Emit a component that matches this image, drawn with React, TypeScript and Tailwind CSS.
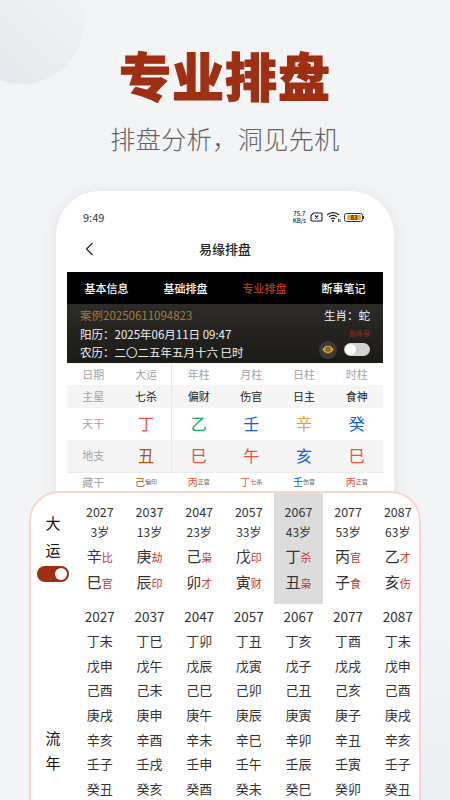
import React from "react";

const cjk = "font-['Noto_Sans_CJK_SC','Noto_Sans',sans-serif]";

const red = "text-[#ee4f3f]";
const blue = "text-[#0f62d6]";
const green = "text-[#17a673]";
const amber = "text-[#ee9f1c]";
const brown = "text-[#a3560f]";

const tabs = ["基本信息", "基础排盘", "专业排盘", "断事笔记"];

const stems = [
  ["丁", red],
  ["乙", green],
  ["壬", blue],
  ["辛", amber],
  ["癸", blue],
];

const branches = [
  ["丑", brown],
  ["巳", red],
  ["午", red],
  ["亥", blue],
  ["巳", red],
];

const hidden = [
  ["己", "偏印", brown],
  ["丙", "正官", red],
  ["丁", "七杀", red],
  ["壬", "伤官", blue],
  ["丙", "正官", red],
];

const dayun = [
  ["2027", "3岁", "辛", "比", "巳", "官"],
  ["2037", "13岁", "庚", "劫", "辰", "印"],
  ["2047", "23岁", "己", "枭", "卯", "才"],
  ["2057", "33岁", "戊", "印", "寅", "财"],
  ["2067", "43岁", "丁", "杀", "丑", "枭"],
  ["2077", "53岁", "丙", "官", "子", "食"],
  ["2087", "63岁", "乙", "才", "亥", "伤"],
];

const liunian = [
  ["丁未", "丁巳", "丁卯", "丁丑", "丁亥", "丁酉", "丁未"],
  ["戊申", "戊午", "戊辰", "戊寅", "戊子", "戊戌", "戊申"],
  ["己酉", "己未", "己巳", "己卯", "己丑", "己亥", "己酉"],
  ["庚戌", "庚申", "庚午", "庚辰", "庚寅", "庚子", "庚戌"],
  ["辛亥", "辛酉", "辛未", "辛巳", "辛卯", "辛丑", "辛亥"],
  ["壬子", "壬戌", "壬申", "壬午", "壬辰", "壬寅", "壬子"],
  ["癸丑", "癸亥", "癸酉", "癸未", "癸巳", "癸卯", "癸丑"],
];

const StatusIcons = () => (
  <div className="flex items-center gap-[3px]">
    <div className="flex flex-col items-center text-[6px] font-medium text-[#222]">
      <span className="leading-[7px]">75.7</span>
      <span className="leading-[7px]">KB/s</span>
    </div>
    <svg width="13" height="10" viewBox="0 0 13 10" className="ml-[1px]">
      <path d="M3.5 1 H11 a1 1 0 0 1 1 1 V8 a1 1 0 0 1 -1 1 H2 a1 1 0 0 1 -1 -1 V3.5 Z" fill="none" stroke="#222" strokeWidth="1.1" />
      <path d="M5 3.5 L8.2 6.5 M8.2 3.5 L5 6.5" stroke="#222" strokeWidth="1.1" />
    </svg>
    <svg width="15" height="12" viewBox="0 0 15 12">
      <path d="M1 4 C4 0.8 10 0.8 13 4 M3 6 C5.2 3.8 8.8 3.8 11 6 M5 8 C6.2 6.8 7.8 6.8 9 8" fill="none" stroke="#222" strokeWidth="1.1" />
      <circle cx="7" cy="10" r="1.1" fill="#222" />
      <path d="M12.5 8 V11 M14 8 V11" stroke="#222" strokeWidth="0.8" />
    </svg>
    <div className="flex items-center">
      <div className="h-[9px] w-[19px] rounded-[2.5px] border border-[#333] p-[1px] flex">
        <div className="w-[14px] ml-[1px] h-full bg-[#f5a922] rounded-[1px] text-[6px] leading-[5px] font-bold text-[#3a2a00] text-center">83</div>
      </div>
      <div className="w-[1px] h-[3px] bg-[#333]" />
    </div>
  </div>
);

const PhoneCard = () => (
  <div className="relative w-[338px] h-[420px] mx-auto mt-[34px] rounded-t-[44px] bg-white shadow-[0_2px_14px_rgba(120,125,140,0.16)] flex flex-col">
    <div className="h-[43px] pl-[27px] pr-[30px] pt-[19px] flex items-start justify-between">
      <span className="text-[11px] leading-[14px] text-[#333]">9:49</span>
      <StatusIcons />
    </div>
    <div className="h-[30px] relative flex items-center justify-center">
      <svg width="9" height="14" viewBox="0 0 9 14" className="absolute left-[29px]">
        <path d="M7.5 1 L1.5 7 L7.5 13" fill="none" stroke="#222" strokeWidth="1.2" />
      </svg>
      <span className="text-[13px] font-medium text-[#222]">易缘排盘</span>
    </div>
    <div className="mx-[11px] mt-[8px] flex flex-col">
      <div className="h-[32px] bg-black grid grid-cols-4 items-center text-center text-[11px] font-medium text-white">
        {tabs.map((t, i) => (
          <span key={t} className={i === 2 ? "text-[#b93a1c]" : ""}>
            {t}
          </span>
        ))}
      </div>
      <div className="h-[59px] bg-gradient-to-b from-[#2c2b27] to-[#1b1a17] pl-[13px] pr-[13px] flex justify-between">
        <div className="flex flex-col pt-[2px] text-[11.5px] leading-[18.5px] text-[#f2f2f0]">
          <span className="text-[#a27c36]">案例20250611094823</span>
          <span>阳历：2025年06月11日 09:47</span>
          <span>农历：二〇二五年五月十六 巳时</span>
        </div>
        <div className="flex flex-col items-end pt-[2px]">
          <span className="text-[11.5px] leading-[18.5px] text-[#f2f2f0]">生肖：蛇</span>
          <span className="text-[7px] leading-[11px] mt-[3px] text-[#8e2f18]">胎命身</span>
          <div className="flex items-center gap-[7px] mt-[2px]">
            <div className="w-[18px] h-[18px] rounded-full bg-[#3b3a36] flex items-center justify-center">
              <svg width="12" height="9" viewBox="0 0 12 9">
                <path fillRule="evenodd" d="M6 0.5 C9 0.5 11 3 11.6 4.5 C11 6 9 8.5 6 8.5 C3 8.5 1 6 0.4 4.5 C1 3 3 0.5 6 0.5 Z M6 2.3 a2.2 2.2 0 1 0 0.01 0 Z M6 3.3 a1.2 1.2 0 1 1 -0.01 0 Z" fill="#c9973a" />
              </svg>
            </div>
            <div className="w-[26px] h-[13px] rounded-full bg-[#d2d2d2] p-[1px] flex">
              <div className="w-[11px] h-[11px] rounded-full bg-white" />
            </div>
          </div>
        </div>
      </div>
      <div className="relative grid grid-cols-6 text-center">
        <div className="absolute left-[104px] top-0 h-[109px] w-[1px] bg-[#e8e8e8]" />
        {["日期", "大运", "年柱", "月柱", "日柱", "时柱"].map((t) => (
          <span key={t} className="h-[22px] text-[11px] leading-[22px] text-[#a3a3a3]">
            {t}
          </span>
        ))}
        <div className="col-span-6 grid grid-cols-6 bg-[#f5f5f5] h-[23px] items-center">
          <span className="text-[11px] text-[#a3a3a3]">主星</span>
          {["七杀", "偏财", "伤官", "日主", "食神"].map((c) => (
            <span key={c} className="text-[11px] text-[#222]">
              {c}
            </span>
          ))}
        </div>
        <div className="col-span-6 grid grid-cols-6 h-[32px] items-center pb-[2px]">
          <span className="text-[11px] text-[#a3a3a3]">天干</span>
          {stems.map(([s, c]) => (
            <span key={s} className={`text-[16px] leading-[20px] ${c}`}>
              {s}
            </span>
          ))}
        </div>
        <div className="col-span-6 grid grid-cols-6 h-[32px] items-center bg-[#f5f5f5] pb-[2px]">
          <span className="text-[11px] text-[#a3a3a3]">地支</span>
          {branches.map(([s, c], i) => (
            <span key={i} className={`text-[16px] leading-[20px] ${c}`}>
              {s}
            </span>
          ))}
        </div>
        <div className="col-span-6 grid grid-cols-6 h-[19px] items-center border-t border-[#ececec]">
          <span className="text-[11px] text-[#a3a3a3]">藏干</span>
          {hidden.map(([s, t, c], i) => (
            <span key={i} className="flex items-center justify-center">
              <span className={`text-[10px] leading-[12px] ${c}`}>{s}</span>
              <span className="text-[6px] leading-[12px] text-[#666]">{t}</span>
            </span>
          ))}
        </div>
      </div>
    </div>
  </div>
);

const BottomPanel = () => (
  <div className="absolute left-[29px] top-[491px] w-[392px] h-[320px] rounded-t-[30px] border-2 border-[#f8d6cd] bg-white overflow-hidden flex flex-col">
    <div className="flex h-[111px]">
      <div className="w-[44px] shrink-0 flex flex-col items-center pt-[16px]">
        <span className="text-[15px] leading-[27px] text-[#111]">大</span>
        <span className="text-[15px] leading-[27px] text-[#111]">运</span>
        <div className="mt-[3px] w-[32px] h-[16px] rounded-full bg-[#9e2f12] p-[2px] flex justify-end">
          <div className="w-[12px] h-[12px] rounded-full bg-white" />
        </div>
      </div>
      <div className="grid grid-cols-[repeat(7,49.67px)]">
        {dayun.map((d, i) => (
          <div key={d[0]} className={`flex flex-col items-center pt-[10px] ${i === 4 ? "bg-[#dcdcdc]" : ""}`}>
            <span className="text-[12.5px] leading-[18px] text-[#333]">{d[0]}</span>
            <span className="text-[12px] leading-[18px] mt-[2px] text-[#333]">{d[1]}</span>
            <span className="flex items-end h-[26px] mt-0">
              <span className="text-[15px] leading-[22px] text-[#333]">{d[2]}</span>
              <span className="text-[11px] leading-[19px] text-[#c4342c]">{d[3]}</span>
            </span>
            <span className="flex items-end h-[26px]">
              <span className="text-[15px] leading-[22px] text-[#333]">{d[4]}</span>
              <span className="text-[11px] leading-[19px] text-[#c4342c]">{d[5]}</span>
            </span>
          </div>
        ))}
      </div>
    </div>
    <div className="flex">
      <div className="w-[44px] shrink-0 flex flex-col items-center pt-[121px]">
        <span className="text-[15px] leading-[25px] text-[#111]">流</span>
        <span className="text-[15px] leading-[25px] text-[#111]">年</span>
      </div>
      <div className="grid grid-cols-[repeat(7,49.67px)] auto-rows-[24.6px] text-center items-center">
        {dayun.map((d) => (
          <span key={d[0]} className="text-[13.5px] text-[#333]">
            {d[0]}
          </span>
        ))}
        {liunian.map((row, r) =>
          row.map((c, i) => (
            <span key={`${r}-${i}`} className="text-[13px] text-[#333]">
              {c}
            </span>
          ))
        )}
      </div>
    </div>
  </div>
);

export default function App() {
  return (
    <div className={`relative w-[450px] h-[800px] overflow-hidden bg-[#f3f4f6] ${cjk}`}>
      <div className="absolute -left-[40px] -top-[40px] w-[124px] h-[124px] rounded-full bg-gradient-to-bl from-[#f3f4f7] to-[#e2e5ea]" />
      <div className="absolute -right-[70px] bottom-[-80px] w-[260px] h-[260px] rounded-full bg-gradient-to-b from-[#f3f4f6] to-[#e9ebef]" />
      <div className="relative flex flex-col items-center">
        <h1 className="mt-[40px] text-[52px] leading-[70px] font-black tracking-[1px] text-[#9e2f12] [-webkit-text-stroke:1px_#9e2f12]">专业排盘</h1>
        <p className="mt-[10px] text-[25px] leading-[37px] tracking-[0.5px] font-light text-[#5f6265]">排盘分析，洞见先机</p>
      </div>
      <PhoneCard />
      <BottomPanel />
    </div>
  );
}
